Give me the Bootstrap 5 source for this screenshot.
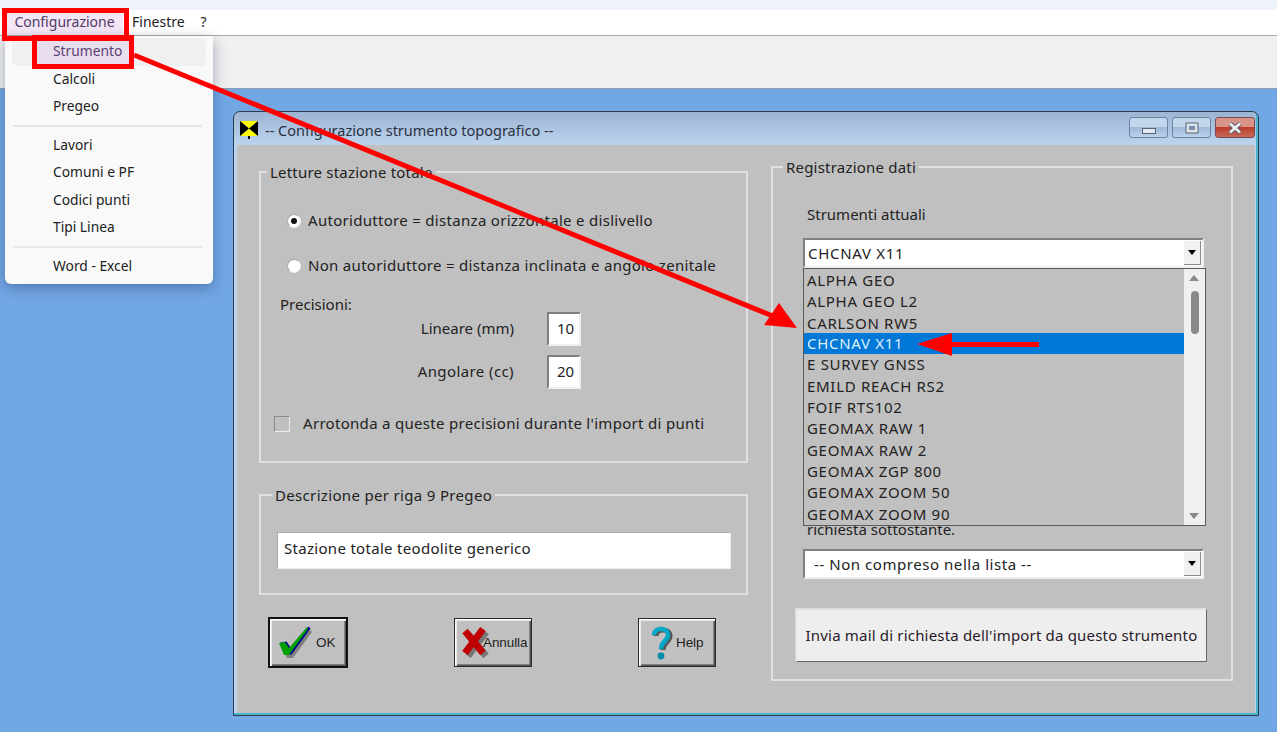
<!DOCTYPE html>
<html lang="it">
<head>
<meta charset="utf-8">
<title>Configurazione strumento topografico</title>
<link href="https://cdn.jsdelivr.net/npm/bootstrap@5.3.0/dist/css/bootstrap.min.css" rel="stylesheet">
<style>
html,body{height:100%}
body{background:#72a7e6;font-family:"Noto Sans","Open Sans",sans-serif;font-size:15px;color:#222;overflow:hidden;position:relative;line-height:20px}
.wide{letter-spacing:.3px}
.wide>span:last-child,.prec-row>span:first-child{padding-bottom:2px}
.top-strip{height:10px;background:#eef3fb}
.menu-strip{height:26px;background:#fff;border-bottom:1px solid #a8a8a8;padding-left:6px}
.menu-entry{padding:0 6px;height:25px;line-height:24px;font-size:14px;color:#222}
.menu-entry.is-open{background:#f5e6f6;color:#4e3a68;width:117px;text-align:center;padding:0}
.tool-strip{height:53px;background:#f0f0f0;border-bottom:1px solid #8c9bb0}
.app-menu.dropdown-menu{position:absolute;left:5px;top:36px;width:208px;height:248px;background:#f9f9f9;border:0;border-radius:0 0 6px 6px;box-shadow:0 4px 14px rgba(30,50,90,.4);padding:2px 7px 0;margin:0;min-width:0}
.app-menu .dropdown-item{padding:0 0 0 41px;height:27.5px;line-height:26px;color:#222;border-radius:5px;font-size:13.8px}
.app-menu .dropdown-item.is-hover{background:#f0f0f0;color:#4e3a68}
.app-menu .dropdown-divider{margin:4px 1px 5px;border-top:2px solid #e6e6e6;width:189px}
.win{position:absolute;left:233px;top:111px;width:1026px;height:605px;border:1px solid #2c3a4a;border-radius:7px 7px 0 0;background:linear-gradient(#9db4d2,#bcd3ee 32px);padding:0 3px 3px;box-shadow:inset -1px -1px 0 #45b5cc,inset -2px -2px 0 #45b5cc}
.win-title{height:33px;padding-left:3px;color:#222}
.win-title .ttl{margin-left:7px;font-size:14.5px;color:#2a3242}
.cap-btn{width:39px;height:21px;border:1px solid #6c84a3;border-radius:3px;background:linear-gradient(#c3d6ec 45%,#9fb9d8 50%,#bcd1ea);display:flex;align-items:center;justify-content:center}
.cap-close{width:40px;background:linear-gradient(#d99488 45%,#bd3c2a 50%,#c66a5a);border-color:#7a4a58}
.cap-group{margin:-2px 0 0 0;gap:4px}
.win-body{height:568px;background:#c0c0c0;padding:12px 0 0 22px;gap:23px}
.grp{border:2px solid #e0e0e0;margin:0;padding:0}
.grp legend{float:none;width:auto;font-size:15px;line-height:20px;margin:0 0 0 6px;padding:0 3px;letter-spacing:.2px}
.grp-a{width:489px;margin-top:5px;height:301px}
.grp-b{width:489px;margin-top:22px;height:110px}
.grp-b legend{margin-left:11px;letter-spacing:.33px}
.grp-r{width:462px;height:524px}
.grp-r legend{margin-left:10px}
.opt-row{height:24px;margin-left:26px;gap:7px}
.radio-dot{width:14px;height:14px;border-radius:50%;background:#fff;border:1px solid #a8a8a8;border-right-color:#eee;border-bottom-color:#eee;display:flex;align-items:center;justify-content:center;flex:none}
.radio-dot i{width:6px;height:6px;background:#111;border-radius:50%}
.prec-row{gap:33px;justify-content:flex-end;margin-right:165px}
.prec-row span{display:block}
.num-box{width:34px;height:34px;background:#fff;border:2px solid;border-color:#808080 #efefef #efefef #808080;line-height:29px;text-align:center;padding-left:3px}
.chk-box{width:16px;height:16px;background:#c0c0c0;border:1px solid;border-color:#8a8a8a #eee #eee #8a8a8a;flex:none}
.text-box{margin:27px 0 0 16px;width:454px;height:37px;background:#fff;border:1px solid #eee;border-top-color:#aaa;border-left-color:#aaa;padding:0 0 0 6px;line-height:31px}
.bmp-row{margin:23px 0 0 9px}
.bmp-btn{height:49px;width:78px;background:#c0c0c0;border:1px solid #2a2a2a;box-shadow:inset 1px 1px 0 #fff,inset 2px 2px 0 #e8e8e8,inset -1px -1px 0 #555,inset -2px -2px 0 #808080;font-family:"Liberation Sans",sans-serif;font-size:13.5px;letter-spacing:-.1px;color:#222;display:flex;align-items:center;padding:0}
.bmp-ok{width:80px;height:51px;border:2px solid #111;margin-top:-1px}
.combo{height:30px;width:401px;background:#fff;border:2px solid;border-color:#808080 #eee #eee #808080;padding-left:3px;line-height:26px;position:relative;letter-spacing:.7px}
.combo-btn{position:absolute;right:1px;top:1px;bottom:1px;width:17px;background:#f0f0f0;border-bottom:1px solid #888;border-right:1px solid #888;display:flex;align-items:center;justify-content:center}
.combo-btn::after{content:"";border:4px solid transparent;border-top:5px solid #000;border-bottom:0}
.pick-list{position:absolute;left:-2px;top:28px;width:403px;height:258px;background:#c0c0c0;border:1px solid #5a5a5a;z-index:2;overflow:hidden;padding:1px 0 0 0}
.pick-list .list-group-item{background:transparent;border:0;border-radius:0;height:21.35px;line-height:21px;padding:0 0 0 3px;color:#222;width:380px;font-size:15px;letter-spacing:.7px}
.pick-list .list-group-item.active{background:#0078d7;color:#dfeffc}
.fake-scroll{position:absolute;right:0;top:0;bottom:0;width:21px;background:#f0f0f0}
.fake-scroll b{position:absolute;left:7px;top:22px;width:8px;height:43px;background:#8a8a8a;border-radius:4px}
.fake-scroll u{position:absolute;left:5px;border:5px solid transparent}
.fake-scroll .up{top:6px;border-top:0;border-bottom:6px solid #8a8a8a}
.fake-scroll .dn{bottom:6px;border-bottom:0;border-top:6px solid #8a8a8a}
.mail-btn{margin:30px 0 0 23px;width:411px;height:53px;background:#eee;border:1px solid #e4e4e4;border-right-color:#666;border-bottom-color:#666;border-radius:0;color:#2a1a2a;font-size:15px;letter-spacing:.18px;padding:0;box-shadow:-1px -1px 0 #ddd}
.annot{position:absolute;left:0;top:0;width:1277px;height:732px;z-index:1100;pointer-events:none}
</style>
</head>
<body>
<div class="top-strip"></div>
<nav class="menu-strip d-flex align-items-start">
  <span class="menu-entry is-open">Configurazione</span>
  <span class="menu-entry" style="padding-left:9px">Finestre</span>
  <span class="menu-entry" style="padding-left:10px">?</span>
</nav>
<div class="tool-strip"></div>

<main class="win">
  <div class="win-title d-flex align-items-center">
    <svg width="18" height="18" viewBox="0 0 18 18" style="margin-top:3px"><path d="M0 0h18L9 7.5zM0 15h18L9 7.5z" fill="#ff0"/><path d="M0 0L9 7.5 0 15zM18 0L9 7.5 18 15z" fill="#000"/><rect x="8" y="15" width="2" height="3" fill="#000"/></svg>
    <span class="ttl" style="margin-top:3px">-- Configurazione strumento topografico --</span>
    <div class="cap-group d-flex ms-auto">
      <span class="cap-btn"><svg width="14" height="6" style="margin-top:6px"><rect x=".5" y=".5" width="13" height="5" fill="#e4e8ee" stroke="#55647a"/></svg></span>
      <span class="cap-btn"><svg width="14" height="12"><rect x="1" y="1" width="12" height="10" fill="#dfe4ea" stroke="#55647a"/><rect x="4" y="4" width="6" height="4" fill="#7a8da8"/></svg></span>
      <span class="cap-btn cap-close"><svg width="16" height="12"><path d="M3 1.5L13 10.5M13 1.5L3 10.5" stroke="#50506a" stroke-width="4.6"/><path d="M3 1.5L13 10.5M13 1.5L3 10.5" stroke="#eee" stroke-width="3"/></svg></span>
    </div>
  </div>
  <div class="win-body d-flex align-items-start">
    <div>
      <fieldset class="grp grp-a">
        <legend>Letture stazione totale</legend>
        <div class="opt-row d-flex align-items-center wide" style="margin-top:27px"><span class="radio-dot"><i></i></span><span>Autoriduttore = distanza orizzontale e dislivello</span></div>
        <div class="opt-row d-flex align-items-center wide" style="margin-top:21px"><span class="radio-dot"></span><span>Non autoriduttore = distanza inclinata e angolo zenitale</span></div>
        <div style="margin:16px 0 0 19px">Precisioni:</div>
        <div class="prec-row d-flex align-items-center" style="margin-top:-2px"><span>Lineare (mm)</span><span class="num-box">10</span></div>
        <div class="prec-row d-flex align-items-center" style="margin-top:9px"><span style="letter-spacing:.4px">Angolare (cc)</span><span class="num-box">20</span></div>
        <div class="d-flex align-items-center wide" style="margin:23px 0 0 13px;height:24px;gap:13px"><span class="chk-box"></span><span>Arrotonda a queste precisioni durante l'import di punti</span></div>
      </fieldset>
      <fieldset class="grp grp-b">
        <legend>Descrizione per riga 9 Pregeo</legend>
        <div class="text-box wide">Stazione totale teodolite generico</div>
      </fieldset>
      <div class="bmp-row d-flex">
        <button class="bmp-btn bmp-ok" type="button">
          <svg width="34" height="36" viewBox="0 0 34 36" style="margin-left:9px;flex:none"><path d="M0 18L6 17L10 23L28 2L30 4L11 30L5 30Z" fill="#808080" transform="translate(3 3)"/><path d="M0 18L6 17L10 23L28 2L30 4L11 30L5 30Z" fill="#000090" transform="translate(1.5 -.5)"/><path d="M0 18L6 17L10 23L28 2L29 4L10 30L5 30Z" fill="#00a000"/></svg>
          <span style="margin-left:3px">OK</span>
        </button>
        <button class="bmp-btn" type="button" style="margin-left:106px">
          <svg width="30" height="34" viewBox="0 0 30 34" style="margin-left:5px;margin-right:-7px;flex:none"><path d="M6 6l18 22M24 4L6 28" stroke="#777" stroke-width="7" transform="translate(2 2)" fill="none"/><path d="M5 5l18 22M23 3L5 27" stroke="#c00000" stroke-width="7" fill="none"/></svg>
          <span>Annulla</span>
        </button>
        <button class="bmp-btn" type="button" style="margin-left:106px">
          <svg width="24" height="38" viewBox="0 0 24 38" style="margin-left:10px;flex:none"><path d="M5 11C5 3 19 3 19 11C19 17 12 17 12 25" fill="none" stroke="#555" stroke-width="5" transform="translate(2 1)"/><path d="M5 11C5 3 19 3 19 11C19 17 12 17 12 25" fill="none" stroke="#00a8c8" stroke-width="4.5"/><circle cx="12" cy="32" r="3.4" fill="#008ca8"/></svg>
          <span style="margin-left:3px">Help</span>
        </button>
      </div>
    </div>
    <fieldset class="grp grp-r">
      <legend>Registrazione dati</legend>
      <div style="margin:27px 0 0 34px">Strumenti attuali</div>
      <div class="combo" style="margin:14px 0 0 30px">CHCNAV X11<span class="combo-btn"></span>
        <div class="pick-list">
          <ul class="list-group">
            <li class="list-group-item">ALPHA GEO</li>
            <li class="list-group-item">ALPHA GEO L2</li>
            <li class="list-group-item">CARLSON RW5</li>
            <li class="list-group-item active">CHCNAV X11</li>
            <li class="list-group-item">E SURVEY GNSS</li>
            <li class="list-group-item">EMILD REACH RS2</li>
            <li class="list-group-item">FOIF RTS102</li>
            <li class="list-group-item">GEOMAX RAW 1</li>
            <li class="list-group-item">GEOMAX RAW 2</li>
            <li class="list-group-item">GEOMAX ZGP 800</li>
            <li class="list-group-item">GEOMAX ZOOM 50</li>
            <li class="list-group-item">GEOMAX ZOOM 90</li>
          </ul>
          <div class="fake-scroll"><u class="up"></u><b></b><u class="dn"></u></div>
        </div>
      </div>
      <div style="margin:251px 0 0 34px">richiesta sottostante.</div>
      <div class="combo" style="margin:10px 0 0 30px;padding-left:9px;letter-spacing:.55px">-- Non compreso nella lista --<span class="combo-btn"></span></div>
      <button class="btn mail-btn" type="button">Invia mail di richiesta dell'import da questo strumento</button>
    </fieldset>
  </div>
</main>

<div class="dropdown-menu show app-menu">
  <a class="dropdown-item is-hover" href="#">Strumento</a>
  <a class="dropdown-item" href="#">Calcoli</a>
  <a class="dropdown-item" href="#">Pregeo</a>
  <hr class="dropdown-divider">
  <a class="dropdown-item" href="#">Lavori</a>
  <a class="dropdown-item" href="#">Comuni e PF</a>
  <a class="dropdown-item" href="#">Codici punti</a>
  <a class="dropdown-item" href="#">Tipi Linea</a>
  <hr class="dropdown-divider">
  <a class="dropdown-item" href="#">Word - Excel</a>
</div>

<svg class="annot" viewBox="0 0 1277 732">
  <rect x="34.5" y="37.5" width="97" height="29" fill="#c060e0" fill-opacity=".12" stroke="#f00" stroke-width="5"/>
  <rect x="4.5" y="10.5" width="122" height="28" fill="none" stroke="#f00" stroke-width="5"/>
  <path d="M134 55L780 319" stroke="#f00" stroke-width="5" fill="none"/>
  <path d="M797 328L764 325L779 303Z" fill="#f00"/>
  <path d="M917 344L952 333V342H1039V347H952V356Z" fill="#f00"/>
</svg>
<script src="https://cdn.jsdelivr.net/npm/bootstrap@5.3.0/dist/js/bootstrap.bundle.min.js"></script>
</body>
</html>
